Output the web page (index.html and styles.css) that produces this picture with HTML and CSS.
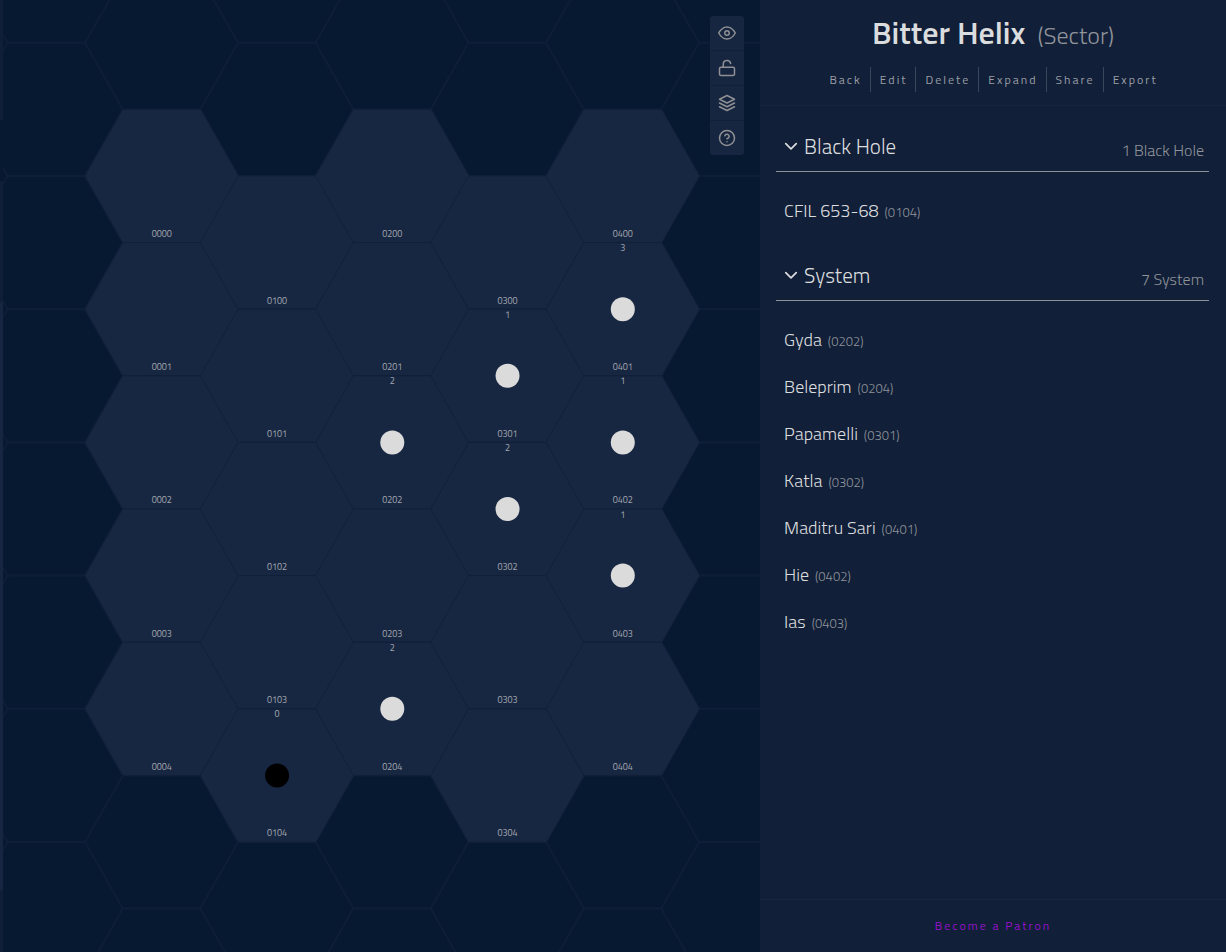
FILE: index.html
```html
<!DOCTYPE html>
<html lang="en">
<head>
<meta charset="utf-8">
<title>Bitter Helix</title>
<link rel="stylesheet" href="styles.css">
</head>
<body>
<div class="app">
  <main class="map">
    <svg class="map-canvas" id="map" role="img" aria-label="Sector map"></svg>
    <div class="map-edge"></div>
    <div class="toolbar">
      <button class="tool" type="button" aria-label="Toggle visibility"><svg class="icon" viewBox="0 0 24 24"><path d="M1 12s4-8 11-8 11 8 11 8-4 8-11 8-11-8-11-8z"/><circle cx="12" cy="12" r="3"/></svg></button>
      <button class="tool" type="button" aria-label="Unlock"><svg class="icon" viewBox="0 0 24 24"><rect x="2" y="11" width="20" height="11" rx="2"/><path d="M7 11V7a5 5 0 0 1 9.9-1"/></svg></button>
      <button class="tool" type="button" aria-label="Layers"><svg class="icon" viewBox="0 0 24 24"><path d="M12 2 2 7l10 5 10-5-10-5zM2 17l10 5 10-5M2 12l10 5 10-5"/></svg></button>
      <button class="tool" type="button" aria-label="Help"><svg class="icon" viewBox="0 0 24 24"><circle cx="12" cy="12" r="10"/><path d="M9.1 9a3 3 0 0 1 5.8 1c0 2-2.9 3-2.9 3M12 17h.01"/></svg></button>
    </div>
  </main>
  <aside class="sidebar">
    <header class="header">
      <h1 class="title">Bitter Helix <span class="title-type">(Sector)</span></h1>
      <nav class="actions">
        <button class="action" type="button">Back</button>
        <button class="action" type="button">Edit</button>
        <button class="action" type="button">Delete</button>
        <button class="action" type="button">Expand</button>
        <button class="action" type="button">Share</button>
        <button class="action" type="button">Export</button>
      </nav>
    </header>
    <div class="content">
      <section class="group">
        <div class="group-header">
          <h2 class="group-title"><svg class="chevron" viewBox="0 0 24 24"><path d="m3 8 9 9 9-9"/></svg>Black Hole</h2>
          <span class="group-count">1 Black Hole</span>
        </div>
        <a class="entity" href="#">CFIL 653-68 <span class="coord">(0104)</span></a>
      </section>
      <section class="group">
        <div class="group-header">
          <h2 class="group-title"><svg class="chevron" viewBox="0 0 24 24"><path d="m3 8 9 9 9-9"/></svg>System</h2>
          <span class="group-count">7 System</span>
        </div>
        <a class="entity" href="#">Gyda <span class="coord">(0202)</span></a>
        <a class="entity" href="#">Beleprim <span class="coord">(0204)</span></a>
        <a class="entity" href="#">Papamelli <span class="coord">(0301)</span></a>
        <a class="entity" href="#">Katla <span class="coord">(0302)</span></a>
        <a class="entity" href="#">Maditru Sari <span class="coord">(0401)</span></a>
        <a class="entity" href="#">Hie <span class="coord">(0402)</span></a>
        <a class="entity" href="#">Ias <span class="coord">(0403)</span></a>
      </section>
    </div>
    <footer class="footer"><a class="patron" href="#">Become a Patron</a></footer>
  </aside>
</div>
<script src="map.js"></script>
</body>
</html>
```
FILE: styles.css
```css
* { box-sizing: border-box; }
body {
  margin: 0;
  background: #071831;
  color: #dbdcde;
  font-family: "Titillium Web", Roboto, sans-serif;
}
button { font: inherit; color: inherit; background: none; border: 0; padding: 0; cursor: pointer; }
a { color: inherit; text-decoration: none; }

.app { display: grid; grid-template-columns: 62fr 38fr; height: 100vh; }

.map { position: relative; overflow: hidden; background: #071831; }
.map-canvas { position: absolute; inset: 0; width: 100%; height: 100%; }
.map-edge {
  position: absolute;
  inset: 0 auto 0 0;
  width: 3px;
  background: linear-gradient(#101f38 120px, #071831 120px 181px, #101f38 181px 302px, #172640 302px 890px, #101f38 890px);
}
.hex { fill: #071831; stroke: #0f1e38; stroke-width: 2; }
.hex-active { fill: #182741; stroke: #12203a; stroke-width: 1; }
.label { fill: #a3a8b1; font-size: 9px; text-anchor: middle; }
.body-system { fill: #dbdbdb; }
.body-hole { fill: #000; }

.toolbar {
  position: absolute;
  top: 16px;
  right: 16px;
  width: 34px;
  display: flex;
  flex-direction: column;
  background: #172640;
  border-radius: 3px;
}
.tool { height: 34px; display: grid; place-items: center; color: #8f9093; }
.tool + .tool { height: 35px; border-top: 1px solid #111f38; }
.icon { width: 18px; height: 18px; fill: none; stroke: currentColor; stroke-width: 2; stroke-linecap: round; stroke-linejoin: round; }

.sidebar { display: flex; flex-direction: column; background: #111f38; min-width: 0; }
.header { height: 106px; padding-top: 9px; border-bottom: 1px solid #172640; text-align: center; }
.title { margin: 0; font-size: 32px; line-height: 46px; font-weight: 600; }
.title-type { margin-left: 5px; font-size: 24px; line-height: 1; font-weight: 300; color: #8f939a; }
.actions { display: flex; justify-content: center; margin-top: 12px; }
.action { height: 25px; padding: 0 8px 0 9px; font-size: 12px; letter-spacing: 2px; color: #9a9ea6; }
.action + .action { border-left: 1px solid #3a465a; }

.content { flex: 1; padding: 16px 17px 0 16px; overflow: auto; }
.group { margin-bottom: 17px; }
.group-header {
  display: flex;
  justify-content: space-between;
  align-items: center;
  height: 50px;
  margin-bottom: 15px;
  padding: 0 5px 2px 8px;
  border-bottom: 1px solid #8b9098;
}
.group-title { display: flex; align-items: center; gap: 6px; margin: 0; font-size: 21px; font-weight: 300; }
.chevron { width: 14px; height: 14px; fill: none; stroke: currentColor; stroke-width: 3; stroke-linecap: round; stroke-linejoin: round; }
.group-count { padding-top: 8px; font-size: 16px; font-weight: 300; color: #8f939a; }
.entity { display: block; padding: 0 8px; font-size: 18px; line-height: 47px; font-weight: 300; }
.coord { margin-left: 2px; font-size: 13px; line-height: 1; color: #8f939a; }

.footer { height: 53px; border-top: 1px solid #172640; text-align: center; }
.patron { font-size: 12px; line-height: 52px; letter-spacing: 2px; color: #9512c8; }
```
FILE: map.js
```javascript
const NS = "http://www.w3.org/2000/svg";
const map = document.getElementById("map");
const COL = 115.25, ROW = 133.2, HALF = 39, RADIUS = 76.8;
const ORIGIN = { x: 161.8, y: 176 };
const bodies = {
  "0104": 0, "0202": 2, "0204": 2, "0301": 1, "0302": 2,
  "0401": 3, "0402": 1, "0403": 1
};

function add(tag, attrs, text) {
  const node = document.createElementNS(NS, tag);
  for (const key in attrs) node.setAttribute(key, attrs[key]);
  if (text !== undefined) node.textContent = text;
  map.appendChild(node);
}

function center(col, row) {
  return {
    x: ORIGIN.x + col * COL,
    y: ORIGIN.y + row * ROW + (Math.abs(col % 2) ? ROW / 2 : 0)
  };
}

function hex(col, row, className) {
  const { x, y } = center(col, row);
  const h = ROW / 2;
  const points = [[-RADIUS, 0], [-HALF, -h], [HALF, -h], [RADIUS, 0], [HALF, h], [-HALF, h]]
    .map(([dx, dy]) => `${x + dx},${y + dy}`).join(" ");
  add("polygon", { points, class: className });
}

const cols = Math.ceil(window.innerWidth / COL);
const rows = Math.ceil(window.innerHeight / ROW);
for (let c = -2; c < cols; c++)
  for (let r = -2; r < rows; r++) hex(c, r, "hex");

for (let c = 0; c < 5; c++)
  for (let r = 0; r < 5; r++) hex(c, r, "hex hex-active");

for (let c = 0; c < 5; c++)
  for (let r = 0; r < 5; r++) {
    const id = `0${c}0${r}`;
    const { x, y } = center(c, r);
    add("text", { x, y: y + 61, class: "label" }, id);
    if (id in bodies) {
      add("text", { x, y: y - 58, class: "label" }, bodies[id]);
      add("circle", { cx: x, cy: y, r: 12, class: id === "0104" ? "body-hole" : "body-system" });
    }
  }
```
